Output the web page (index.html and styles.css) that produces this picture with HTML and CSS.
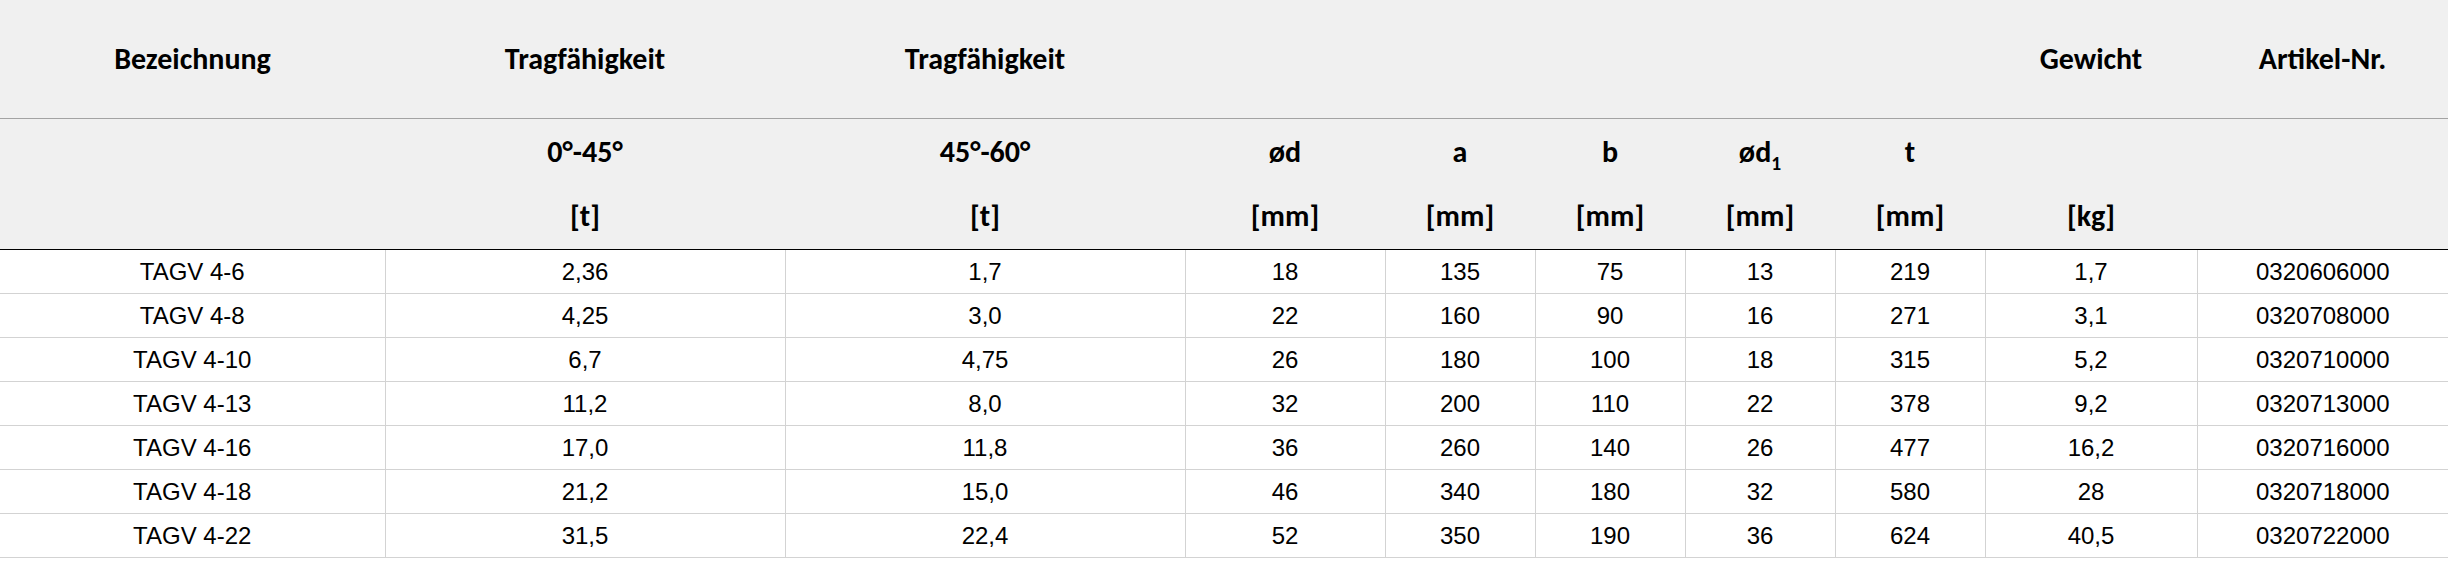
FILE: index.html
```html
<!DOCTYPE html>
<html lang="de">
<head>
<meta charset="utf-8">
<title>TAGV</title>
<link rel="stylesheet" href="styles.css">
</head>
<body>
<table class="spec">
  <colgroup>
    <col class="c-name"><col class="c-load"><col class="c-load"><col class="c-dim-l"><col class="c-dim"><col class="c-dim"><col class="c-dim"><col class="c-dim"><col class="c-weight"><col class="c-art">
  </colgroup>
  <thead>
    <tr class="head-top">
      <th>Bezeichnung</th>
      <th>Tragfähigkeit</th>
      <th>Tragfähigkeit</th>
      <th></th><th></th><th></th><th></th><th></th>
      <th>Gewicht</th>
      <th>Artikel-Nr.</th>
    </tr>
    <tr class="head-sub">
      <th></th>
      <th>0°-45°<br><br>[t]</th>
      <th>45°-60°<br><br>[t]</th>
      <th>ød<br><br>[mm]</th>
      <th>a<br><br>[mm]</th>
      <th>b<br><br>[mm]</th>
      <th>ød<sub>1</sub><br><br>[mm]</th>
      <th>t<br><br>[mm]</th>
      <th><br><br>[kg]</th>
      <th></th>
    </tr>
  </thead>
  <tbody>
    <tr><td>TAGV 4-6</td><td>2,36</td><td>1,7</td><td>18</td><td>135</td><td>75</td><td>13</td><td>219</td><td>1,7</td><td>0320606000</td></tr>
    <tr><td>TAGV 4-8</td><td>4,25</td><td>3,0</td><td>22</td><td>160</td><td>90</td><td>16</td><td>271</td><td>3,1</td><td>0320708000</td></tr>
    <tr><td>TAGV 4-10</td><td>6,7</td><td>4,75</td><td>26</td><td>180</td><td>100</td><td>18</td><td>315</td><td>5,2</td><td>0320710000</td></tr>
    <tr><td>TAGV 4-13</td><td>11,2</td><td>8,0</td><td>32</td><td>200</td><td>110</td><td>22</td><td>378</td><td>9,2</td><td>0320713000</td></tr>
    <tr><td>TAGV 4-16</td><td>17,0</td><td>11,8</td><td>36</td><td>260</td><td>140</td><td>26</td><td>477</td><td>16,2</td><td>0320716000</td></tr>
    <tr><td>TAGV 4-18</td><td>21,2</td><td>15,0</td><td>46</td><td>340</td><td>180</td><td>32</td><td>580</td><td>28</td><td>0320718000</td></tr>
    <tr><td>TAGV 4-22</td><td>31,5</td><td>22,4</td><td>52</td><td>350</td><td>190</td><td>36</td><td>624</td><td>40,5</td><td>0320722000</td></tr>
  </tbody>
</table>
</body>
</html>
```
FILE: styles.css
```css
html, body {
  margin: 0;
  padding: 0;
  background: #ffffff;
}

.spec {
  width: 2448px;
  table-layout: fixed;
  border-collapse: collapse;
  border-spacing: 0;
  color: #000;
}

.c-name { width: 385px; }
.c-load { width: 400px; }
.c-dim-l { width: 200px; }
.c-dim { width: 150px; }
.c-weight { width: 212px; }
.c-art { width: 251px; }

.spec thead {
  background: #f0f0f0;
}

.spec th {
  font-family: Carlito, "Open Sans", "Liberation Sans", sans-serif;
  font-weight: 700;
  font-size: 30px;
  line-height: 32px;
  text-align: center;
  vertical-align: middle;
  padding: 0;
}

.head-top th {
  height: 118px;
  border-bottom: 1px solid #a3a3a3;
}

.head-sub th {
  height: 130px;
  border-bottom: 1px solid #000;
}

.head-sub sub {
  font-size: 0.65em;
  line-height: 0;
  vertical-align: -0.4em;
}

.spec td {
  font-family: "Liberation Sans", Arial, sans-serif;
  font-size: 24px;
  line-height: 26px;
  height: 43px;
  padding: 0;
  text-align: center;
  vertical-align: middle;
  border-bottom: 1px solid #d3d3d3;
  border-left: 1px solid #d3d3d3;
}

.spec td:first-child {
  border-left: 0;
}
```
